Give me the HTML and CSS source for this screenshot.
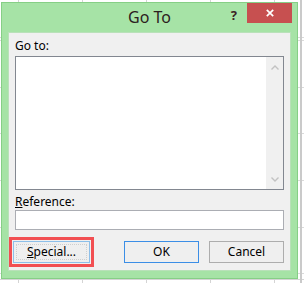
FILE: index.html
```html
<!DOCTYPE html>
<html><head><meta charset="UTF-8">
    <title>Go To</title>
    <link rel="stylesheet" href="styles.css">
  </head>
  <body>
    <div class="window">
      <div class="titlebar">
        <span></span>
        <span class="title">Go To</span>
        <div class="controls">
          <span class="help">?</span>
          <span class="close">
            <svg width="8" height="8" viewBox="0 0 8 8"><path d="M0.8 0.8L7.2 7.2M7.2 0.8L0.8 7.2" stroke="#fff" stroke-width="1.7"/></svg>
          </span>
        </div>
      </div>
      <div class="panel">
        <div class="label">Go to:</div>
        <div class="listbox">
          <div class="list"></div>
          <div class="scrollbar">
            <svg width="8" height="5" viewBox="0 0 8 5"><path d="M0.5 4.5L4 1L7.5 4.5" fill="none" stroke="#c2c2c2" stroke-width="1.4"/></svg>
            <svg width="8" height="5" viewBox="0 0 8 5"><path d="M0.5 0.5L4 4L7.5 0.5" fill="none" stroke="#c2c2c2" stroke-width="1.4"/></svg>
          </div>
        </div>
        <div class="label ref"><u>R</u>eference:</div>
        <div class="input"></div>
        <div class="buttons">
          <div class="highlight"><button class="btn special"><u>S</u>pecial...</button></div>
          <button class="btn ok">OK</button>
          <button class="btn cancel">Cancel</button>
        </div>
      </div>
    </div>
  </body>
</html>
```

FILE: styles.css
```css
body {
  margin: 0;
  width: 304px;
  height: 283px;
  overflow: hidden;
  background-color: #fff;
  /* spreadsheet grid behind the dialog */
  background-image:
    linear-gradient(to right, transparent 300px, #cacaca 300px, #cacaca 302px, transparent 302px),
    linear-gradient(to bottom, transparent 279px, #d4d4d4 279px, #d4d4d4 280px, transparent 280px),
    repeating-linear-gradient(to bottom, #dadada 0, #dadada 1px, transparent 1px, transparent 46.7px),
    repeating-linear-gradient(to right, #d4d4d4 0, #d4d4d4 1px, transparent 1px, transparent 64px);
  background-position: 0 0, 0 0, 0 40px, 18px 0;
  font-family: "Noto Sans", "Open Sans", sans-serif;
}

/*dialog frame*/
.window {
  margin: 2px 0 0 1px;
  width: 297px;
  height: 277px;
  box-sizing: border-box;
  border: 1px solid #86cf86;
  background: #a6e3a6;
  display: flex;
  flex-direction: column;
}

.titlebar {
  height: 29px;
  display: grid;
  grid-template-columns: 1fr auto 1fr;
}

.title {
  font-size: 16px;
  line-height: 29px;
  color: #2c2020;
}

.controls {
  display: flex;
  justify-content: flex-end;
  align-items: flex-start;
  padding-right: 5px;
}

.help {
  font-size: 13px;
  font-weight: bold;
  line-height: 14px;
  margin-top: 5px;
  margin-right: 10px;
  color: #3b2323;
}

.close {
  width: 45px;
  height: 20px;
  background: #c75050;
  display: flex;
  align-items: center;
  justify-content: center;
}

/*dialog body*/
.panel {
  margin: 0 6px;
  height: 239px;
  box-sizing: border-box;
  border: 1px solid #b9e1b9;
  background: #f0f0f0;
  padding: 5px 6px 0;
}

.label {
  font-size: 12px;
  line-height: 16px;
  height: 16px;
  color: #000;
}

.ref {
  margin-top: 4px;
}

.listbox {
  margin-top: 2px;
  height: 134px;
  box-sizing: border-box;
  border: 1px solid #828790;
  background: #fff;
  display: flex;
}

.list {
  flex: 1;
}

.scrollbar {
  width: 17px;
  background: #f0f0f0;
  display: flex;
  flex-direction: column;
  justify-content: space-between;
  align-items: center;
  padding: 8px 0 7px;
  box-sizing: border-box;
}

.input {
  height: 20px;
  box-sizing: border-box;
  border: 1px solid #abadb3;
  background: #fff;
}

/*buttons*/
.buttons {
  display: flex;
  align-items: center;
  margin-top: 7px;
  margin-left: -6px;
}

.highlight {
  border: 3px solid #f24f52;
  padding: 1px;
  margin-right: auto;
  display: flex;
}

.btn {
  font-family: "Noto Sans", "Open Sans", sans-serif;
  font-size: 12px;
  line-height: 18px;
  height: 22px;
  width: 75px;
  padding: 0;
  box-sizing: border-box;
  border: 1px solid #adadad;
  background: #efefef;
  color: #000;
}

.special {
  width: 77px;
  border-color: #8dbfe9;
  outline: 1px dotted #cfcfcf;
  outline-offset: -4px;
}

.ok {
  border-color: #3b8ee6;
}

.cancel {
  margin-left: 10px;
}
```
